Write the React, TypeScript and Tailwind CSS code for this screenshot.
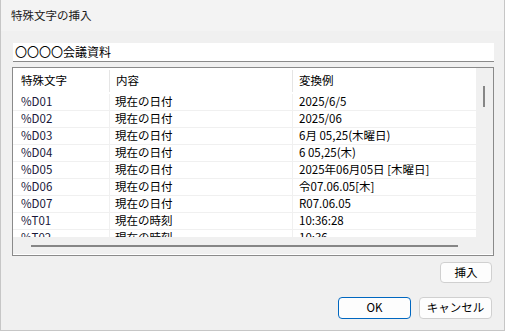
const rows = [
  ["%D01", "現在の日付", "2025/6/5"],
  ["%D02", "現在の日付", "2025/06"],
  ["%D03", "現在の日付", "6月 05,25(木曜日)"],
  ["%D04", "現在の日付", "6 05,25(木)"],
  ["%D05", "現在の日付", "2025年06月05日 [木曜日]"],
  ["%D06", "現在の日付", "令07.06.05[木]"],
  ["%D07", "現在の日付", "R07.06.05"],
  ["%T01", "現在の時刻", "10:36:28"],
  ["%T02", "現在の時刻", "10:36"],
]

export default function App() {
  return (
    <div className="w-[505px] h-[331px] bg-[#f0f0f0] border-x border-b border-[#c6c6c6] flex flex-col font-['Noto_Sans_CJK_JP',sans-serif] text-[11.5px] text-black">
      {/* title */}
      <div className="h-[31px] bg-[#f3f3f3] pl-[10px] flex items-center text-[#1b1b1b]">
        特殊文字の挿入
      </div>

      <div className="flex flex-col pl-[11px] pr-[10px] pt-[12px]">
        <div className="ml-[1px] h-[19px] bg-white border-b border-[#8a8a8a] flex items-center pl-[2px] text-[12px] leading-none">
          〇〇〇〇会議資料
        </div>

        {/* list */}
        <div className="mt-[5px] h-[189px] border border-[#8a8a8a] bg-white flex flex-col">
          <div className="flex h-[169px]">
            <div className="w-[463px] overflow-hidden">
              <div className="flex h-[26px] items-center leading-none">
                <div className="w-[96px] pl-[8px]">特殊文字</div>
                <div className="w-px h-[22px] bg-[#e5e5e5]" />
                <div className="w-[182px] pl-[6px]">内容</div>
                <div className="w-px h-[22px] bg-[#e5e5e5]" />
                <div className="pl-[6px]">変換例</div>
              </div>
              {rows.map((r) => (
                <div key={r[0]} className="flex h-[17px] border-b border-[#f0f0f0] leading-none">
                  <div className="w-[97px] pl-[8px] flex items-center border-r border-[#f0f0f0] text-[#18183a]">{r[0]}</div>
                  <div className="w-[183px] pl-[5px] flex items-center border-r border-[#f0f0f0]">{r[1]}</div>
                  <div className="pl-[6px] flex items-center">{r[2]}</div>
                </div>
              ))}
            </div>
            <div className="w-[17px] bg-[#f0f0f0] pl-[7px] pt-[18px]">
              <div className="w-[2px] h-[21px] bg-[#868686]" />
            </div>
          </div>
          <div className="h-[17px] bg-[#f0f0f0] flex items-center pl-[18px]">
            <div className="w-[427px] h-[2px] bg-[#868686]" />
          </div>
        </div>

        <div className="flex justify-end mt-[6px] pr-[2px]">
          <button className="w-[52px] h-[21px] bg-[#fdfdfd] border border-[#d0d0d0] rounded-[4px] leading-none">挿入</button>
        </div>

        <div className="flex justify-end gap-[8px] mt-[14px] pr-[2px]">
          <button className="w-[73px] h-[22px] bg-[#fdfdfd] border border-[#0067c0] rounded-[4px] leading-none">OK</button>
          <button className="w-[73px] h-[22px] bg-[#fdfdfd] border border-[#d0d0d0] rounded-[4px] leading-none">キャンセル</button>
        </div>
      </div>
    </div>
  )
}
